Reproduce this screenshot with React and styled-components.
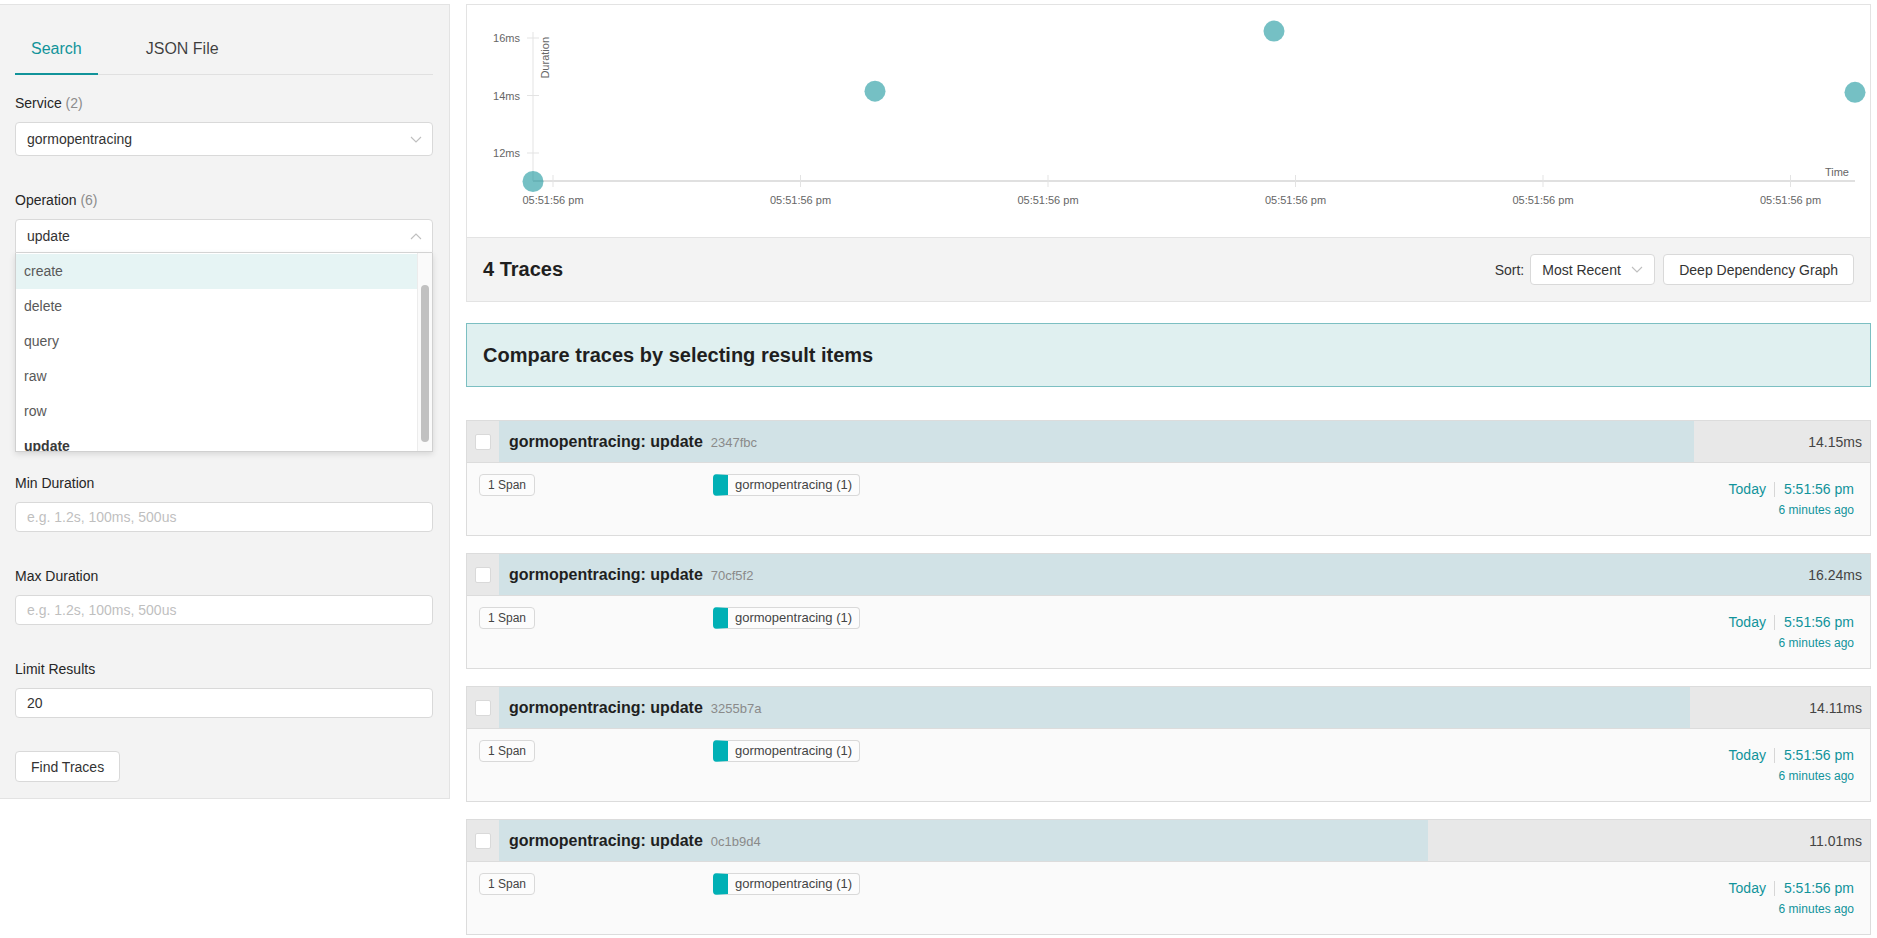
import React from 'react'
import styled, { createGlobalStyle } from 'styled-components'

const TEAL = '#11939a'

const GlobalStyle = createGlobalStyle`
  html, body { margin: 0; padding: 0; background: #fff; }
  body {
    font-family: 'Liberation Sans', Arial, Helvetica, sans-serif;
    font-size: 14px;
    color: rgba(0, 0, 0, 0.85);
  }
  * { box-sizing: border-box; }
`

const Page = styled.div`
  display: flex;
  align-items: flex-start;
  padding: 4px 6px 0 0;
`

/* ---------- sidebar ---------- */

const Sidebar = styled.aside`
  width: 450px;
  flex: none;
  background: #f3f3f3;
  border: 1px solid #e3e3e3;
  border-left: none;
  padding: 20px 16px 16px 15px;
`

const TabNav = styled.div`
  display: flex;
  gap: 32px;
  border-bottom: 1px solid #e0e0e0;
  margin-bottom: 17px;
`

const Tab = styled.div`
  position: relative;
  padding: 12px 16px 13px;
  font-size: 16px;
  line-height: 24px;
  color: ${p => (p.$active ? TEAL : 'rgba(0,0,0,0.75)')};
  &::after {
    content: '';
    position: absolute;
    left: 0;
    right: 0;
    bottom: -1px;
    height: 2px;
    background: ${p => (p.$active ? TEAL : 'transparent')};
  }
`

// the open operation menu covers the fields below it, so that item keeps the room
const FormItem = styled.div`
  margin-bottom: ${p => p.$gap || 33}px;
`

const Label = styled.label`
  display: block;
  font-size: 14px;
  line-height: 22px;
  margin-bottom: 8px;
  color: #262626;
`

const Count = styled.span`
  color: #8c8c8c;
`

const SelectBox = styled.div`
  position: relative;
  height: ${p => p.$h || 34}px;
  background: #fff;
  border: 1px solid #d9d9d9;
  border-radius: ${p => (p.$open ? '4px 4px 0 0' : '4px')};
  display: flex;
  align-items: center;
  justify-content: space-between;
  padding: 0 10px 0 11px;
  font-size: 14px;
  color: #333;
`

const Input = styled.input`
  display: block;
  width: 100%;
  height: 30px;
  border: 1px solid #d9d9d9;
  border-radius: 4px;
  padding: 0 11px;
  font-family: inherit;
  font-size: 14px;
  color: #333;
  background: #fff;
  outline: none;
  &::placeholder {
    color: #bfbfbf;
  }
`

const Dropdown = styled.div`
  position: absolute;
  top: calc(100% + 1px);
  left: -1px;
  right: -1px;
  height: 199px;
  background: #fff;
  border: 1px solid #d0d0d0;
  border-top: none;
  box-shadow: 0 2px 6px rgba(0, 0, 0, 0.12);
  display: flex;
  overflow: hidden;
  z-index: 10;
`

const OptionList = styled.div`
  flex: 1;
  overflow: hidden;
  padding-top: 1px;
`

const Option = styled.div`
  height: 35px;
  line-height: 35px;
  padding: 0 8px;
  font-size: 14px;
  color: ${p => (p.$selected ? '#3a3a3a' : '#595959')};
  font-weight: ${p => (p.$selected ? 'bold' : 'normal')};
  background: ${p => (p.$hl ? '#e6f4f4' : '#fff')};
`

const ScrollTrack = styled.div`
  width: 15px;
  flex: none;
  background: #fafafa;
  border-left: 1px solid #ececec;
  padding: 32px 3px 0 3px;
`

const ScrollThumb = styled.div`
  height: 157px;
  border-radius: 4px;
  background: #c1c1c1;
`

const Button = styled.button`
  height: ${p => p.$h || 31}px;
  padding: 0 15px;
  border: 1px solid #d9d9d9;
  border-radius: 4px;
  background: #fff;
  font-family: inherit;
  font-size: 14px;
  color: #333;
  cursor: pointer;
`

const Chevron = ({ up }) => (
  <svg width="12" height="7" viewBox="0 0 12 7">
    <polyline
      points={up ? '1,6 6,1 11,6' : '1,1 6,6 11,1'}
      fill="none"
      stroke="#bfbfbf"
      strokeWidth="1.1"
    />
  </svg>
)

/* ---------- main ---------- */

const Main = styled.main`
  flex: 1;
  min-width: 0;
  margin-left: 16px;
`

const ResultsCard = styled.section`
  border: 1px solid #e3e3e3;
`

const ChartArea = styled.div`
  height: 232px;
  background: #fff;
  svg {
    display: block;
    font-family: 'Liberation Sans', Arial, sans-serif;
    font-size: 11px;
  }
  text {
    fill: #666;
  }
`

const ResultsHeader = styled.div`
  height: 64px;
  border-top: 1px solid #e3e3e3;
  background: #f3f3f3;
  display: flex;
  align-items: center;
  padding: 0 16px;
`

const HeaderTitle = styled.h2`
  flex: 1;
  margin: 0;
  font-size: 20px;
  font-weight: bold;
  color: #1f1f1f;
`

const SortLabel = styled.span`
  font-size: 14px;
  color: #333;
  margin-right: 6px;
`

const SortSelect = styled(SelectBox)`
  width: 125px;
  height: 31px;
  margin-right: 8px;
  padding-right: 11px;
`

const CompareBox = styled.div`
  margin-top: 21px;
  height: 64px;
  border: 1px solid #7cbfc2;
  background: #e0f0f0;
  display: flex;
  align-items: center;
  padding: 0 16px;
  font-size: 20px;
  font-weight: bold;
  color: #1f1f1f;
`

const TraceList = styled.div`
  margin-top: 33px;
  display: flex;
  flex-direction: column;
  gap: 17px;
`

const TraceItem = styled.div`
  border: 1px solid #dcdcdc;
`

const TraceHeader = styled.div`
  display: flex;
  height: 42px;
  border-bottom: 1px solid #dcdcdc;
`

const CheckCell = styled.div`
  width: 32px;
  flex: none;
  background: #e8e8e8;
  display: flex;
  align-items: center;
  justify-content: center;
`

const Checkbox = styled.span`
  width: 16px;
  height: 16px;
  background: #fff;
  border: 1px solid #d9d9d9;
  border-radius: 2px;
`

const DurationArea = styled.div`
  flex: 1;
  position: relative;
  background: #e8e8e8;
  display: flex;
  align-items: center;
  justify-content: space-between;
  padding: 0 8px 0 10px;
`

const DurationBar = styled.div`
  position: absolute;
  left: 0;
  top: 0;
  bottom: 0;
  background: #d1e2e6;
`

const TraceTitle = styled.div`
  position: relative;
  font-size: 16px;
  font-weight: bold;
  color: #1f1f1f;
`

const TraceId = styled.span`
  margin-left: 8px;
  font-size: 13px;
  font-weight: normal;
  color: #8a8a8a;
`

const Duration = styled.span`
  position: relative;
  font-size: 14px;
  color: #444;
`

const TraceBody = styled.div`
  height: 72px;
  background: #fafafa;
  display: flex;
  align-items: flex-start;
  padding: 11px 16px 0 12px;
`

const SpanCol = styled.div`
  width: 234px;
  flex: none;
`

const ServicesCol = styled.div`
  flex: 1;
`

const Tag = styled.span`
  display: inline-block;
  height: 22px;
  line-height: 20px;
  padding: 0 8px;
  border: 1px solid #d9d9d9;
  border-radius: 4px;
  background: #fcfcfc;
  font-size: 12px;
  color: #444;
`

const ServiceTag = styled(Tag)`
  border-left: 15px solid ${p => p.$color};
  padding: 0 7px;
  font-size: 13px;
`

const TimeCol = styled.div`
  padding-top: 5px;
  text-align: right;
  color: ${TEAL};
`

const TimeLine = styled.div`
  display: flex;
  align-items: center;
  justify-content: flex-end;
  font-size: 14px;
  line-height: 20px;
`

const TimeSep = styled.span`
  width: 1px;
  height: 15px;
  background: #d6d6d6;
  margin: 0 9px 0 8px;
`

const Ago = styled.div`
  margin-top: 3px;
  font-size: 12px;
  line-height: 16px;
`

/* ---------- data ---------- */

const operations = ['create', 'delete', 'query', 'raw', 'row', 'update']

const traces = [
  { id: '2347fbc', duration: 14.15, x: 408 },
  { id: '70cf5f2', duration: 16.24, x: 807 },
  { id: '3255b7a', duration: 14.11, x: 1388 },
  { id: '0c1b9d4', duration: 11.01, x: 66 },
]

const maxDuration = Math.max(...traces.map(t => t.duration))

const yOf = ms => 33 + (16 - ms) * 28.75
const yTicks = [16, 14, 12]
const xTicks = [86, 333.5, 581, 828.5, 1076, 1323.5]

const ScatterPlot = () => (
  <svg width="100%" height="232">
    <line x1={66} y1={27} x2={66} y2={176} stroke="#e3e3e3" />
    {yTicks.map(v => (
      <g key={v}>
        <line x1={60} x2={72} y1={yOf(v)} y2={yOf(v)} stroke="#e3e3e3" />
        <text x={53} y={yOf(v) + 4} textAnchor="end">
          {v}ms
        </text>
      </g>
    ))}
    <text transform="translate(82,32) rotate(-90)" textAnchor="end">
      Duration
    </text>
    <line x1={66} y1={176} x2={1388} y2={176} stroke="#e0e0e0" strokeWidth={2} />
    {xTicks.map(x => (
      <g key={x}>
        <line x1={x} x2={x} y1={170} y2={182} stroke="#e3e3e3" />
        <text x={x} y={199} textAnchor="middle">
          05:51:56 pm
        </text>
      </g>
    ))}
    <text x={1382} y={171} textAnchor="end">
      Time
    </text>
    {traces.map(t => (
      <circle key={t.id} cx={t.x} cy={yOf(t.duration)} r={10.5} fill="#12939a" fillOpacity={0.58} />
    ))}
  </svg>
)

const SearchForm = () => (
  <Sidebar>
    <TabNav>
      <Tab $active>Search</Tab>
      <Tab>JSON File</Tab>
    </TabNav>

    <FormItem>
      <Label>
        Service <Count>(2)</Count>
      </Label>
      <SelectBox>
        <span>gormopentracing</span>
        <Chevron />
      </SelectBox>
    </FormItem>

    <FormItem $gap={219}>
      <Label>
        Operation <Count>(6)</Count>
      </Label>
      <SelectBox $open>
        <span>update</span>
        <Chevron up />
        <Dropdown>
          <OptionList>
            {operations.map(op => (
              <Option key={op} $hl={op === 'create'} $selected={op === 'update'}>
                {op}
              </Option>
            ))}
          </OptionList>
          <ScrollTrack>
            <ScrollThumb />
          </ScrollTrack>
        </Dropdown>
      </SelectBox>
    </FormItem>

    <FormItem>
      <Label>Min Duration</Label>
      <Input placeholder="e.g. 1.2s, 100ms, 500us" />
    </FormItem>

    <FormItem>
      <Label>Max Duration</Label>
      <Input placeholder="e.g. 1.2s, 100ms, 500us" />
    </FormItem>

    <FormItem>
      <Label>Limit Results</Label>
      <Input defaultValue="20" />
    </FormItem>

    <Button>Find Traces</Button>
  </Sidebar>
)

const ResultItem = ({ id, duration }) => (
  <TraceItem>
    <TraceHeader>
      <CheckCell>
        <Checkbox />
      </CheckCell>
      <DurationArea>
        <DurationBar style={{ width: `${(duration / maxDuration) * 100}%` }} />
        <TraceTitle>
          gormopentracing: update<TraceId>{id}</TraceId>
        </TraceTitle>
        <Duration>{duration.toFixed(2)}ms</Duration>
      </DurationArea>
    </TraceHeader>
    <TraceBody>
      <SpanCol>
        <Tag>1 Span</Tag>
      </SpanCol>
      <ServicesCol>
        <ServiceTag $color="#00b0b5">gormopentracing (1)</ServiceTag>
      </ServicesCol>
      <TimeCol>
        <TimeLine>
          Today
          <TimeSep />
          5:51:56 pm
        </TimeLine>
        <Ago>6 minutes ago</Ago>
      </TimeCol>
    </TraceBody>
  </TraceItem>
)

const App = () => (
  <>
    <GlobalStyle />
    <Page>
      <SearchForm />
      <Main>
        <ResultsCard>
          <ChartArea>
            <ScatterPlot />
          </ChartArea>
          <ResultsHeader>
            <HeaderTitle>4 Traces</HeaderTitle>
            <SortLabel>Sort:</SortLabel>
            <SortSelect>
              <span>Most Recent</span>
              <Chevron />
            </SortSelect>
            <Button>Deep Dependency Graph</Button>
          </ResultsHeader>
        </ResultsCard>
        <CompareBox>Compare traces by selecting result items</CompareBox>
        <TraceList>
          {traces.map(t => (
            <ResultItem key={t.id} {...t} />
          ))}
        </TraceList>
      </Main>
    </Page>
  </>
)

export default App
